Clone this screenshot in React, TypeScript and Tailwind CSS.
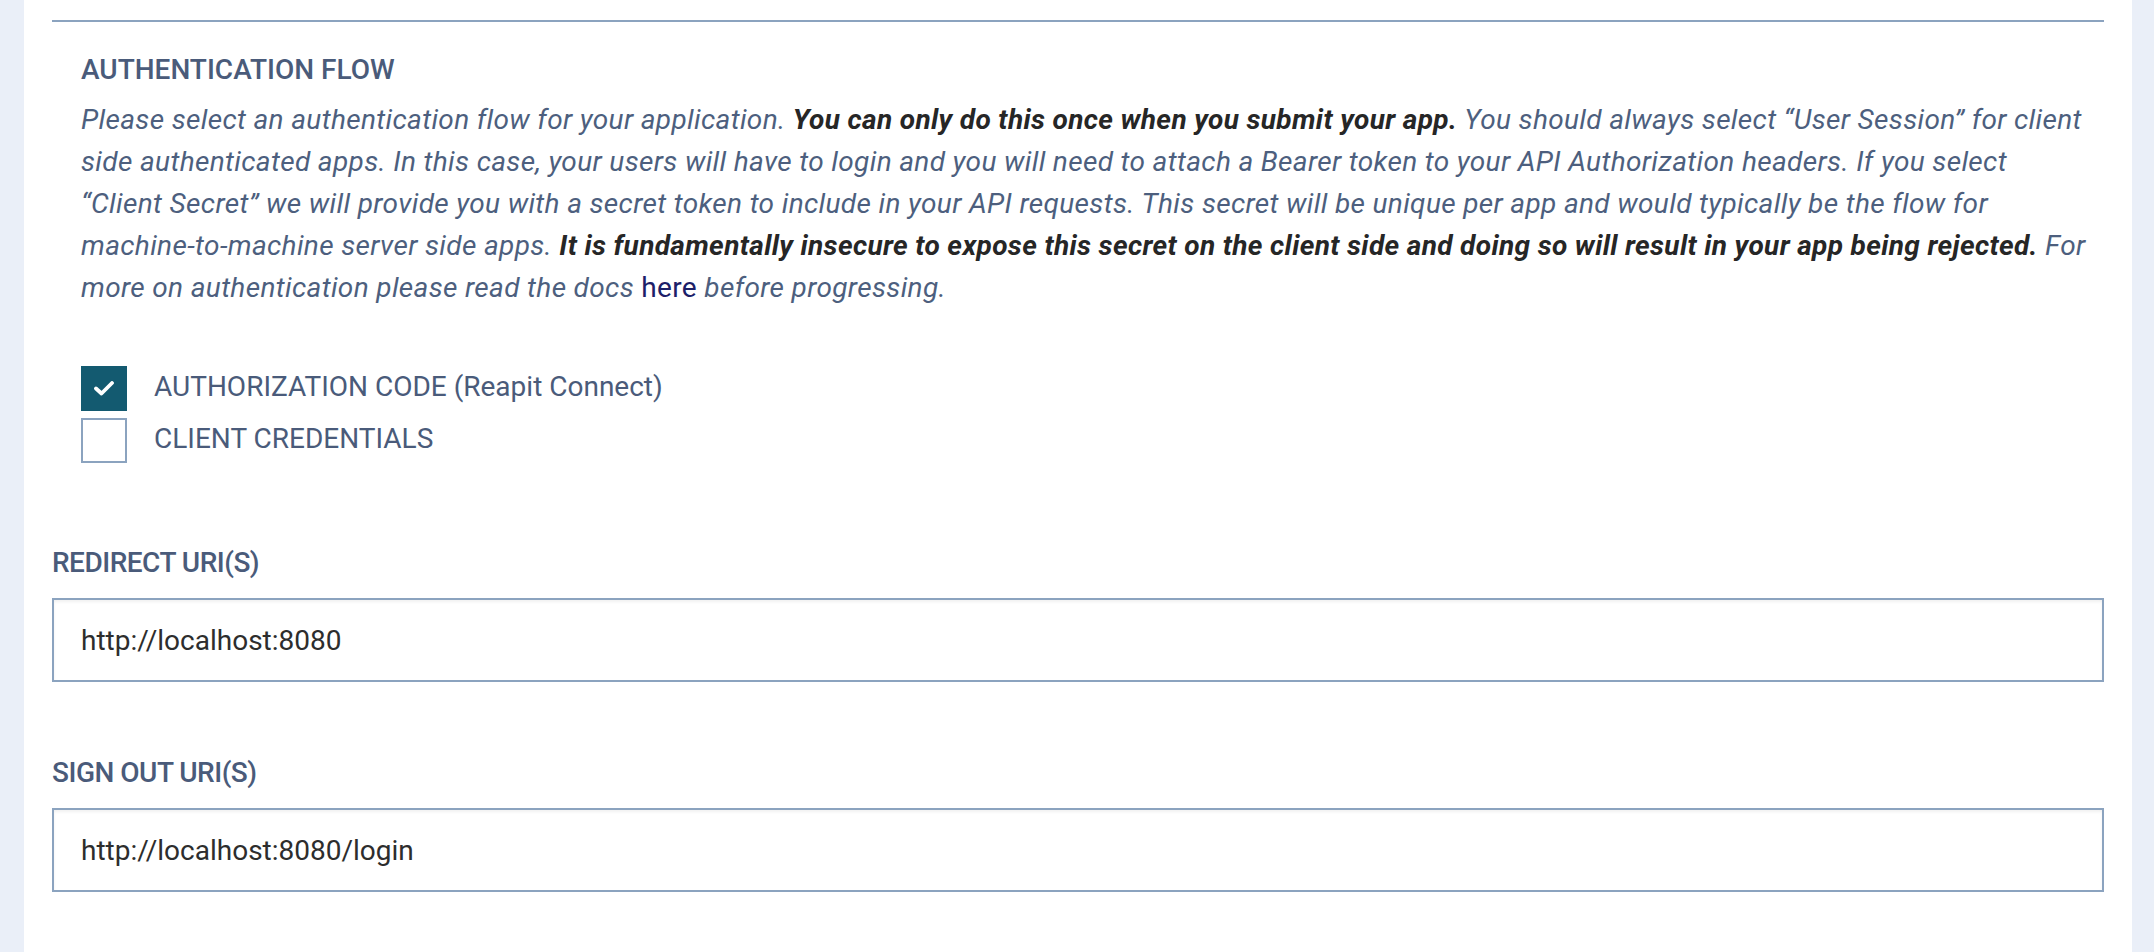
import React from "react";

function Checkbox({ checked, label }: { checked?: boolean; label: string }) {
  return (
    <label className="flex items-center gap-[27px]">
      {checked ? (
        <span className="flex h-[45px] w-[46px] items-center justify-center bg-[#135a70]">
          <svg width="20" height="15" viewBox="0 0 20 15" fill="none">
            <polyline
              points="2,7.5 7.5,12.5 18,2"
              stroke="#ffffff"
              strokeWidth="3.8"
              strokeLinecap="round"
              strokeLinejoin="round"
            />
          </svg>
        </span>
      ) : (
        <span className="h-[45px] w-[46px] border-2 border-[#8ba3bf] bg-white" />
      )}
      <span className="-mt-[3px] text-[28px] leading-[42px] text-[#4a5b7a]">{label}</span>
    </label>
  );
}

function UriField({ label, value }: { label: string; value: string }) {
  return (
    <div className="flex flex-col">
      <div className="text-[28px] font-medium leading-[42px] tracking-[-0.5px] text-[#4a5b7a]">{label}</div>
      <input
        readOnly
        value={value}
        className="mt-[14px] h-[84px] w-full border-2 border-[#8ba3bf] bg-white pl-[27px] text-[28px] text-[#2d2d2d] shadow-[inset_0_2px_3px_rgba(0,0,0,0.06)] outline-none"
      />
    </div>
  );
}

export default function App() {
  return (
    <div className="flex h-[952px] w-full overflow-hidden bg-white font-['Roboto',sans-serif]">
      <div className="w-[24px] shrink-0 bg-[#eaeff8]" />

      <main className="flex-1 px-[28px] pt-[20px]">
        <section className="border-t-2 border-[#8ba3bf] pl-[29px] pr-[16px] pt-[27px]">
          <h2 className="text-[28px] font-medium leading-[42px] text-[#4a5b7a]">AUTHENTICATION FLOW</h2>
          <p className="mt-[8px] text-[28px] italic leading-[42px] tracking-[0.35px] text-[#4d5f7e]">
            Please select an authentication flow for your application.{" "}
            <strong className="font-bold text-[#262626]">You can only do this once when you submit your app.</strong> You
            should always select “User Session” for client side authenticated apps. In this case, your users will have
            to login and you will need to attach a Bearer token to your API Authorization headers. If you select “Client
            Secret” we will provide you with a secret token to include in your API requests. This secret will be unique
            per app and would typically be the flow for machine-to-machine server side apps.{" "}
            <strong className="font-bold text-[#262626]">
              It is fundamentally insecure to expose this secret on the client side and doing so will result in your app
              being rejected.
            </strong>{" "}
            For more on authentication please read the docs{" "}
            <a href="#" className="not-italic text-[#1c2068]">
              here
            </a>{" "}
            before progressing.
          </p>

          <div className="mt-[57px] flex flex-col gap-[7px]">
            <Checkbox checked label="AUTHORIZATION CODE (Reapit Connect)" />
            <Checkbox label="CLIENT CREDENTIALS" />
          </div>
        </section>

        <div className="mt-[79px] flex flex-col gap-[70px]">
          <UriField label="REDIRECT URI(S)" value="http://localhost:8080" />
          <UriField label="SIGN OUT URI(S)" value="http://localhost:8080/login" />
        </div>
      </main>

      <div className="w-[22px] shrink-0 bg-[#eaeff8]" />
    </div>
  );
}
